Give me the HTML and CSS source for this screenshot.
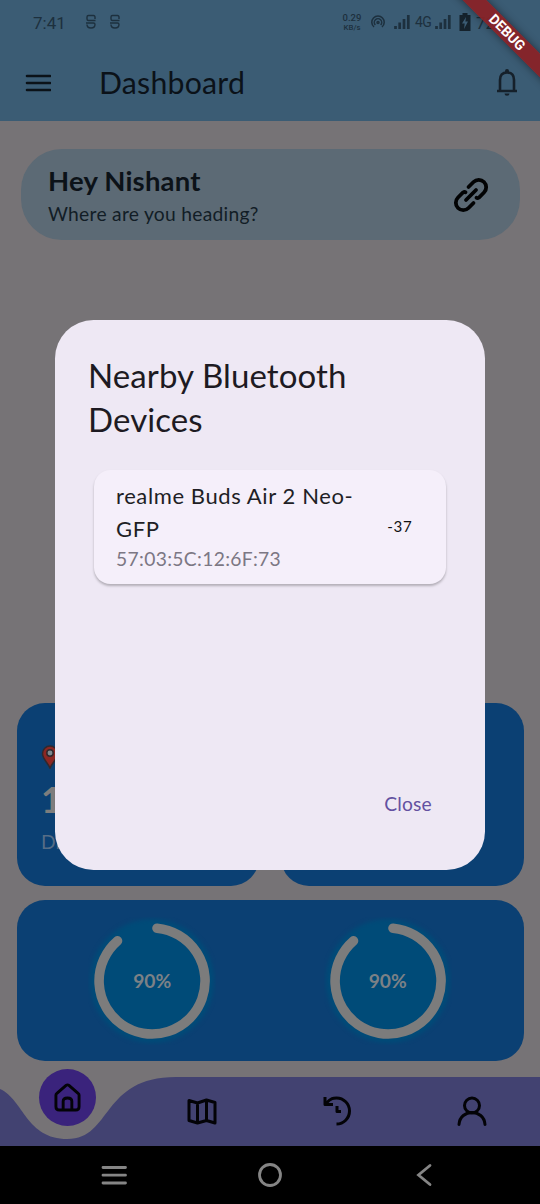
FILE: index.html
```html
<!DOCTYPE html>
<html lang="en">
<head>
<meta charset="utf-8">
<title>Dashboard</title>
<link rel="stylesheet" href="styles.css">
</head>
<body>
<div class="phone">
  <header class="top">
    <div class="status">
      <span class="time">7:41</span>
      <svg class="s-icon" width="12" height="16" viewBox="0 0 12 16"><path d="M10 5V3Q10 1.500 8.500 1.500H3.500Q2 1.500 2 3V5Q2 6.500 3.500 6.500H10.500M1 9H8.500Q10 9 10 10.500Q10 14 6 14Q2 14 2 10.500"/></svg>
      <svg class="s-icon" width="12" height="16" viewBox="0 0 12 16"><path d="M10 5V3Q10 1.500 8.500 1.500H3.500Q2 1.500 2 3V5Q2 6.500 3.500 6.500H10.500M1 9H8.500Q10 9 10 10.500Q10 14 6 14Q2 14 2 10.500"/></svg>
      <span class="speed">0.29<br><small>KB/s</small></span>
      <svg class="hotspot" width="14" height="14" viewBox="0 0 14 14"><path d="M3 12A6.200 6.200 0 1 1 11 12M4.300 9.900A3.700 3.700 0 1 1 9.700 9.900"/><circle cx="7" cy="7.500" r="1"/></svg>
      <svg class="signal" width="16" height="14" viewBox="0 0 16 14"><path d="M1.500 11V14M5.700 7.500V14M10 4V14M14.300 0V14"/></svg>
      <span class="net">4G</span>
      <svg class="signal sig2" width="16" height="14" viewBox="0 0 16 14"><path d="M1.500 11V14M5.700 7.500V14M10 4V14M14.300 0V14"/></svg>
      <svg class="battery" width="12" height="18" viewBox="0 0 12 18"><path class="cell" d="M3.500 0H8.500V2H11.500V18H.5V2H3.500Z"/><path class="bolt" d="M7 4L3 10.500H5.700L5 16L9 8.500H6.400Z"/></svg>
      <span class="pct">72%</span>
    </div>
    <div class="appbar">
      <svg class="menu" width="26" height="18" viewBox="0 0 26 18"><path d="M2 2H25M2 9H25M2 16H25"/></svg>
      <h1>Dashboard</h1>
      <svg class="bell" width="22" height="28" viewBox="0 0 22 28"><path d="M1 22H21M4 22V11Q4 3.500 11 3.500Q18 3.500 18 11V22"/><path class="fill" d="M9 3V2a2 2 0 0 1 4 0V3ZM8.500 24.500h5a2.500 2.200 0 0 1-5 0Z"/></svg>
    </div>
  </header>

  <main class="content">
    <section class="greeting">
      <div>
        <h2>Hey Nishant</h2>
        <p>Where are you heading?</p>
      </div>
      <svg width="36" height="36" viewBox="0 0 36 36"><path d="M15.500 10L20.500 5A7.200 7.200 0 0 1 31 15.500L26 20.500Q24.500 21.500 23.500 20.700M20.500 26L15.500 31A7.200 7.200 0 0 1 5 20.500L10 15.500Q11.500 14.500 12.500 15.300M13 23L23 13"/></svg>
    </section>
    <section class="tiles">
      <div class="tile">
        <svg width="18" height="24" viewBox="0 0 18 24"><path class="pin" d="M9 23C7 18 1.500 14 1.500 8.500A7.500 7.500 0 0 1 16.500 8.500C16.500 14 11 18 9 23Z"/><circle class="hole" cx="9" cy="8" r="3.200"/></svg>
        <strong>12</strong>
        <span>Distance</span>
      </div>
      <div class="tile"></div>
    </section>
    <section class="gauges">
      <div class="gauge"><svg width="128" height="128" viewBox="0 0 128 128"><circle class="disc" cx="64" cy="64" r="62"/><path class="arc" d="M69 11.200A53 53 0 1 1 29.500 23.800"/></svg><span>90%</span></div>
      <div class="gauge"><svg width="128" height="128" viewBox="0 0 128 128"><circle class="disc" cx="64" cy="64" r="62"/><path class="arc" d="M69 11.200A53 53 0 1 1 29.500 23.800"/></svg><span>90%</span></div>
    </section>
  </main>

  <nav class="nav">
    <svg class="nav-shape" width="540" height="78" viewBox="0 0 540 78"><path d="M0 21C24 32 26 71 67.500 71C112 71 101 9 176 9H540V78H0Z"/></svg>
    <div class="nav-items">
      <div class="nav-item active"><span class="bubble"><svg width="28" height="30" viewBox="0 0 28 30"><path d="M2 12.500Q2 11.500 3 10.700L12.500 2.500Q14 1.300 15.500 2.500L25 10.700Q26 11.500 26 12.500V24.500Q26 28 22.500 28H5.500Q2 28 2 24.500ZM9.500 28V19Q9.500 15.500 14 15.500Q18.500 15.500 18.500 19V28"/></svg></span></div>
      <div class="nav-item"><svg width="30" height="27" viewBox="0 0 30 27"><path d="M2 2.500L10.500 5L19.500 2L28 4.500V25L19.500 22.500L10.500 25L2 22.500ZM10.500 5V25M19.500 2V22.500"/></svg></div>
      <div class="nav-item"><svg width="28" height="30" viewBox="0 0 28 30"><path d="M2 1V8.500H10M3 7.500C8 2 10.500 2 13.500 2A13 13 0 0 1 13.500 28M14 10V15.500H18"/></svg></div>
      <div class="nav-item"><svg width="30" height="30" viewBox="0 0 30 30"><circle cx="15" cy="9.500" r="7.500"/><path d="M2 28.500C3 12.500 27 12.500 28 28.500"/></svg></div>
    </div>
  </nav>
  <footer class="system">
    <svg width="26" height="20" viewBox="0 0 26 20"><path d="M2 2.500H24.500M2 10.200H24.500M2 18H24.500"/></svg>
    <svg width="26" height="26" viewBox="0 0 26 26"><circle cx="13" cy="13" r="10.500"/></svg>
    <svg width="16" height="24" viewBox="0 0 16 24"><path d="M14 2.500L2.500 12L14 21.500"/></svg>
  </footer>

  <div class="dialog">
    <h3>Nearby Bluetooth Devices</h3>
    <div class="device">
      <div class="device-text"><b>realme Buds Air 2 Neo-GFP</b><span>57:03:5C:12:6F:73</span></div>
      <span class="rssi">-37</span>
    </div>
    <button class="close">Close</button>
  </div>
  <div class="ribbon">DEBUG</div>
</div>
</body>
</html>
```

FILE: styles.css
```css
* { box-sizing: border-box; margin: 0; padding: 0; }
body { font-family: Lato, sans-serif; color: #10161b; }
svg { display: block; flex: none; fill: none; }
.phone { position: relative; width: 540px; height: 1204px; overflow: hidden; background: #767376; display: flex; flex-direction: column; }

.top { height: 121px; background: #3b5c74; flex: none; }
.status { height: 44px; display: flex; align-items: center; padding-left: 33px; font-family: Roboto, sans-serif; color: #1d303e; white-space: nowrap; }
.time { font-size: 17px; width: 52px; padding-top: 2px; }
.s-icon { margin-right: 12px; stroke: #1d303e; stroke-width: 1.4; }
.speed { margin-left: 209px; width: 20px; font-size: 9.500px; line-height: 9px; text-align: center; font-weight: 500; }
.speed small { font-size: 7.800px; }
.hotspot { margin-left: 9px; stroke: #1d303e; stroke-width: 1.500; }
.signal { margin-left: 9px; stroke: #1d303e; stroke-width: 2.700; }
.net { margin-left: 5px; width: 16px; font-size: 14px; letter-spacing: -.7px; }
.sig2 { margin-left: 4px; }
.battery { margin-left: 8px; }
.battery .cell { fill: #15222c; }
.battery .bolt { fill: #3b5c74; }
.pct { margin-left: 5px; padding-top: 2px; font-size: 17px; }
.appbar { height: 77px; display: flex; align-items: center; padding: 0 22px 0 25px; }
.menu { width: 26px; stroke: #0b1218; stroke-width: 2.600; stroke-linecap: round; }
.appbar h1 { font-size: 30.250px; font-weight: 400; line-height: 36px; margin: -2px 0 0 48px; letter-spacing: .22px; flex: 1; color: #0b1219; }
.bell { stroke: #15202a; stroke-width: 2.600; }
.bell .fill { fill: #15202a; stroke: none; }

.content { padding: 28px 16.500px 0; height: 940px; display: flex; flex-direction: column; }
.greeting { height: 91px; margin: 0 0 0 4px; width: 499px; border-radius: 41px; background: #5c6a75; display: flex; justify-content: space-between; align-items: center; padding: 0 30.500px 0 27.500px; }
.greeting h2 { font-size: 27.500px; line-height: 33px; font-weight: 700; letter-spacing: .18px; margin-top: 2px; color: #0c1218; }
.greeting p { font-size: 19.250px; line-height: 27px; letter-spacing: .27px; margin-top: 3px; color: #121d26; }
.greeting svg { stroke: #020304; stroke-width: 3.800; stroke-linecap: round; }
.tiles { margin-top: auto; display: flex; gap: 22px; }
.tile { width: 242.500px; height: 183px; border-radius: 28px; background: #0b4073; padding: 42px 24.500px; display: flex; flex-direction: column; }
.tile .pin { fill: #8c2723; stroke: #32282d; stroke-width: 1.500; }
.tile .hole { fill: #7d898f; stroke: #32282d; stroke-width: 1.500; }
.tile strong { font-size: 36px; line-height: 42px; color: #7d7d7d; margin-top: 9px; }
.tile span { font-size: 19.250px; line-height: 24px; color: #566d86; margin-top: 10px; }
.gauges { margin-top: 14px; height: 161px; border-radius: 28px; background: #0b4073; display: flex; justify-content: center; gap: 107.500px; align-items: center; }
.gauge { display: grid; place-items: center; }
.gauge > * { grid-area: 1 / 1; }
.disc { fill: #004b78; filter: blur(2px); }
.arc { stroke: #7c7c7c; stroke-width: 9.600; stroke-linecap: round; }
.gauge span { z-index: 1; font-size: 19.250px; font-weight: 700; color: #7c8186; }

.nav { height: 78px; margin-top: 7px; display: grid; flex: none; }
.nav > * { grid-area: 1 / 1; }
.nav-shape { fill: #424271; }
.nav-items { display: grid; grid-template-columns: repeat(4, 1fr); z-index: 1; }
.nav-item { display: flex; justify-content: center; align-items: center; padding: 8px 1px 0 0; }
.nav-item svg { stroke: #030307; stroke-width: 3; stroke-linejoin: round; }
.nav-item:last-child svg { stroke-linecap: round; }
.nav-item.active { align-items: flex-start; padding: 1px 0 0; }
.bubble { width: 57px; height: 57px; border-radius: 50%; background: #3a237c; display: flex; align-items: center; justify-content: center; }
.bubble svg { width: 27px; height: 29px; }
.system { height: 58px; background: #000; display: flex; justify-content: space-between; align-items: center; padding: 0 108px 0 101px; flex: none; }
.system svg { stroke: #858585; stroke-width: 2.800; stroke-linecap: round; }
.system svg:nth-child(2) { margin-right: 4px; }

.dialog { position: absolute; left: 55px; top: 320px; width: 430px; height: 550px; border-radius: 38.500px; background: #eee8f4; padding: 33px 33px 34px; display: flex; flex-direction: column; }
.dialog h3 { font-size: 33px; font-weight: 400; line-height: 44px; letter-spacing: .1px; color: #1d1a22; }
.device { width: 352px; height: 114px; margin: 29px 0 0 5.500px; border-radius: 16.500px; background: #f5effa; box-shadow: 0 2px 2.500px rgba(0,0,0,.25); display: flex; align-items: center; justify-content: space-between; padding: 0 33px 2px 22.500px; }
.device-text { width: 250px; margin-top: -2px; }
.device b { display: block; font-weight: 400; font-size: 22px; line-height: 33px; letter-spacing: .6px; color: #211e25; }
.device-text span { display: block; font-size: 19.250px; line-height: 27px; letter-spacing: .34px; color: #7c7784; }
.rssi { font-size: 15.100px; letter-spacing: .69px; color: #111; }
.close { align-self: flex-end; margin: auto 20px 18px 0; border: 0; background: none; font: 400 19.250px/28px Lato, sans-serif; letter-spacing: .2px; color: #6351a1; }
.ribbon { position: absolute; left: 427px; top: 24px; width: 160px; height: 17px; transform: rotate(45deg); background: rgba(138,33,38,.93); box-shadow: 0 0 8px rgba(0,0,0,.45); color: #fff; font: 700 14px/17px Roboto, sans-serif; text-align: center; }
```
